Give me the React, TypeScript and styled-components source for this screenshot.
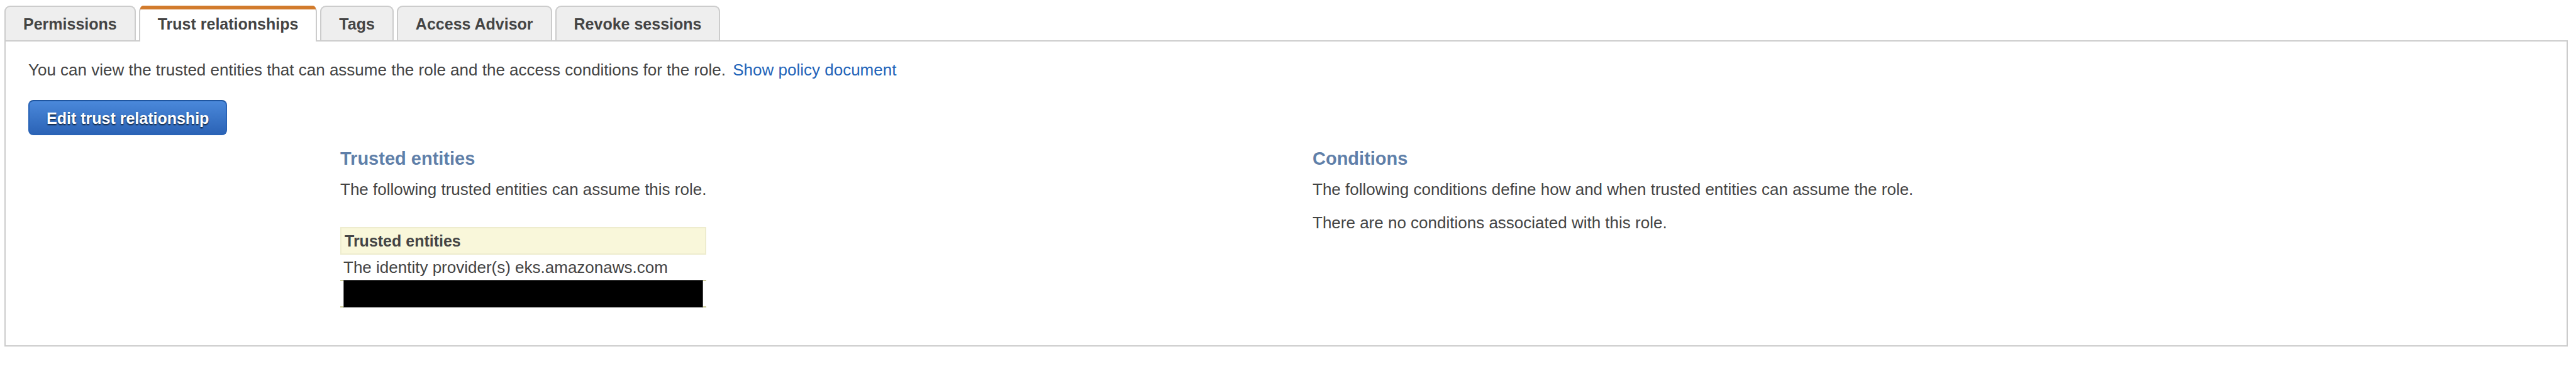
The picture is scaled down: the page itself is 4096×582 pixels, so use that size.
import React, { useState } from "react";
import styled, { createGlobalStyle, css } from "styled-components";

const GlobalStyle = createGlobalStyle`
  * { box-sizing: border-box; }
  body {
    margin: 0;
    background: #fff;
    color: #444;
    font-family: "Helvetica Neue", "Liberation Sans", Arial, sans-serif;
    font-size: 26px;
    line-height: 32px;
  }
`;

const Page = styled.main`
  padding: 9px 13px 31px 7px;
`;

const TabList = styled.div`
  display: flex;
  gap: 5px;
`;

const Tab = styled.button<{ $active: boolean }>`
  position: relative;
  height: 55px;
  padding: 1px 28px 0;
  border: 2px solid #ccc;
  border-bottom: 0;
  border-radius: 9px 9px 0 0;
  background: #eee;
  color: #444;
  font: bold 25px/32px "Liberation Sans", Arial, sans-serif;
  cursor: pointer;

  ${(p) =>
    p.$active &&
    css`
      height: 57px;
      margin-bottom: -2px;
      padding-bottom: 2px;
      background: #fff;

      &::before {
        content: "";
        position: absolute;
        top: -2px;
        left: 0;
        right: 0;
        height: 6px;
        border-radius: 5px 5px 0 0;
        background: #d27b2c;
      }
    `}
`;

const Panel = styled.section`
  padding: 29px 36px 60px;
  border: 2px solid #ccc;
`;

const Intro = styled.p`
  margin: 0 0 32px;
`;

const PolicyLink = styled.a`
  margin-left: 4px;
  color: #2264b9;
  text-decoration: none;
`;

const PrimaryButton = styled.button`
  display: block;
  height: 56px;
  padding: 1px 27px 0;
  border: 2px solid #2963b6;
  border-top-color: #1e55a0;
  border-radius: 8px;
  background: linear-gradient(#4a88da, #2b63b6);
  color: #fff;
  font: bold 25px/32px "Liberation Sans", Arial, sans-serif;
  text-shadow: 0 2px 2px rgba(0, 0, 0, 0.7);
  cursor: pointer;
`;

const Details = styled.div`
  display: grid;
  grid-template-columns: 496fr 1546fr 1958fr;
  margin-top: 20px;
`;

const Column = styled.section<{ $start: number }>`
  grid-column: ${(p) => p.$start};
  justify-self: start;
`;

const Heading = styled.h2`
  margin: 0 0 16px;
  color: #5f7fa9;
  font-size: 29px;
  line-height: 34px;
`;

const Text = styled.p`
  margin: 0 0 21px;
`;

const EntityTable = styled.table`
  width: 100%;
  margin-top: 44px;
  border-spacing: 0;

  th {
    height: 44px;
    padding: 0 5px;
    border: 2px solid #eeecce;
    background: #f9f7da;
    font-size: 25px;
    text-align: left;
  }

  td {
    height: 40px;
    padding: 0 5px;
  }
`;

const HiddenCell = styled.td`
  border: solid #cccc99;
  border-width: 2px 0;
`;

const Redaction = styled.div`
  height: 44px;
  margin: -2px 0;
  border: 1px solid #555;
  background: #000;
`;

const tabs = [
  "Permissions",
  "Trust relationships",
  "Tags",
  "Access Advisor",
  "Revoke sessions",
];

export default function App() {
  const [active, setActive] = useState("Trust relationships");

  return (
    <Page>
      <GlobalStyle />
      <TabList role="tablist">
        {tabs.map((name) => (
          <Tab
            key={name}
            type="button"
            role="tab"
            aria-selected={name === active}
            $active={name === active}
            onClick={() => setActive(name)}
          >
            {name}
          </Tab>
        ))}
      </TabList>
      <Panel role="tabpanel">
        <Intro>
          You can view the trusted entities that can assume the role and the
          access conditions for the role.{" "}
          <PolicyLink href="#policy">Show policy document</PolicyLink>
        </Intro>
        <PrimaryButton type="button">Edit trust relationship</PrimaryButton>
        <Details>
          <Column $start={2}>
            <Heading>Trusted entities</Heading>
            <Text>The following trusted entities can assume this role.</Text>
            <EntityTable>
              <thead>
                <tr>
                  <th scope="col">Trusted entities</th>
                </tr>
              </thead>
              <tbody>
                <tr>
                  <td>The identity provider(s) eks.amazonaws.com</td>
                </tr>
                <tr>
                  <HiddenCell>
                    <Redaction />
                  </HiddenCell>
                </tr>
              </tbody>
            </EntityTable>
          </Column>
          <Column $start={3}>
            <Heading>Conditions</Heading>
            <Text>
              The following conditions define how and when trusted entities can
              assume the role.
            </Text>
            <Text>There are no conditions associated with this role.</Text>
          </Column>
        </Details>
      </Panel>
    </Page>
  );
}
